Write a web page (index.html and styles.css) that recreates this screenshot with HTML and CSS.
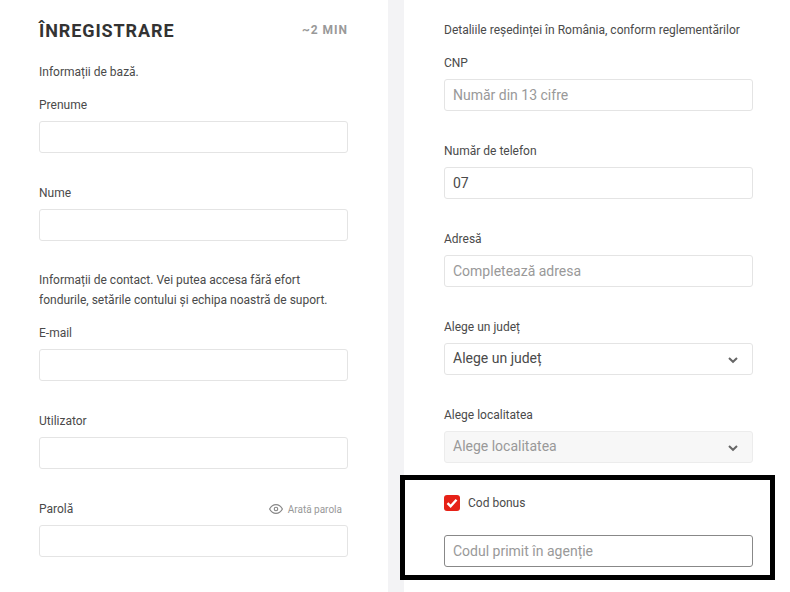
FILE: index.html
```html
<!DOCTYPE html>
<html lang="ro">
<head>
<meta charset="utf-8">
<title>Înregistrare</title>
<link rel="stylesheet" href="styles.css">
</head>
<body>
<main class="page">
  <section class="card card-left">
    <header class="head">
      <h1 class="title">ÎNREGISTRARE</h1>
      <span class="time">~2 MIN</span>
    </header>
    <p class="info info-base">Informații de bază.</p>
    <div class="field"><label class="label">Prenume</label><input class="input"></div>
    <div class="field"><label class="label">Nume</label><input class="input"></div>
    <p class="info info-contact">Informații de contact. Vei putea accesa fără efort fondurile, setările contului și echipa noastră de suport.</p>
    <div class="field"><label class="label">E-mail</label><input class="input"></div>
    <div class="field"><label class="label">Utilizator</label><input class="input"></div>
    <div class="field">
      <div class="label-row">
        <label class="label">Parolă</label>
        <span class="show">
          <svg class="eye" width="14" height="14" viewBox="0 0 24 24" fill="none" stroke="currentColor" stroke-width="2"><path d="M1 12s4-7.5 11-7.5S23 12 23 12s-4 7.5-11 7.5S1 12 1 12z"/><circle cx="12" cy="12" r="3"/></svg>
          Arată parola
        </span>
      </div>
      <input class="input">
    </div>
  </section>
  <div class="gutter"></div>
  <section class="card card-right">
    <p class="info info-res">Detaliile reședinței în România, conform reglementărilor</p>
    <div class="field"><label class="label">CNP</label><input class="input" placeholder="Număr din 13 cifre"></div>
    <div class="field"><label class="label">Număr de telefon</label><input class="input" value="07"></div>
    <div class="field"><label class="label">Adresă</label><input class="input" placeholder="Completează adresa"></div>
    <div class="field">
      <label class="label">Alege un județ</label>
      <div class="select"><span>Alege un județ</span><svg class="chev" width="12" height="8" viewBox="0 0 12 8" fill="none" stroke="currentColor" stroke-width="2"><path d="M2 2 6 5.8 10 2"/></svg></div>
    </div>
    <div class="field field-last">
      <label class="label">Alege localitatea</label>
      <div class="select select-off"><span>Alege localitatea</span><svg class="chev" width="12" height="8" viewBox="0 0 12 8" fill="none" stroke="currentColor" stroke-width="2"><path d="M2 2 6 5.8 10 2"/></svg></div>
    </div>
    <div class="bonus">
      <div class="check-row">
        <span class="check"><svg width="16" height="16" viewBox="0 0 16 16" fill="none" stroke="#fff" stroke-width="2.4"><path d="M3.5 8.2 6.6 11.2 12.5 4.8"/></svg></span>
        <span class="check-label">Cod bonus</span>
      </div>
      <input class="input input-focus" placeholder="Codul primit în agenție">
    </div>
  </section>
</main>
</body>
</html>
```

FILE: styles.css
```css
* { box-sizing: border-box; }
html, body { margin: 0; padding: 0; height: 592px; overflow: hidden; background: #f3f3f5; }
body { font-family: Roboto, "Liberation Sans", sans-serif; color: #4a4a4a; }
.page { display: flex; width: 790px; height: 592px; }
.card { background: #fff; height: 592px; }
.card-left { width: 388px; padding: 0 40px 0 39px; }
.gutter { width: 16px; background: #f3f3f5; }
.card-right { width: 386px; padding: 0 37px 0 40px; }
.head { display: flex; justify-content: space-between; align-items: center; height: 60px; }
.title { margin: 0; font-size: 18px; font-weight: 700; letter-spacing: 0.9px; color: #333; }
.time { font-size: 12px; font-weight: 700; letter-spacing: 1px; color: #999; }
.info { margin: 0; font-size: 12px; line-height: 20px; color: #4a4a4a; }
.info-base { margin-top: 2px; height: 20px; }
.info-contact { margin-top: 0; height: 40px; line-height: 19.5px; margin-bottom: 12px; }
.info-res { padding-top: 20px; height: 53px; }
.field { height: 88px; }
.field-last { height: 70px; }
.info-base + .field { margin-top: 13px; height: 88px; }
.label { display: block; font-size: 12px; line-height: 20px; height: 26px; color: #4a4a4a; }
.label-row { display: flex; justify-content: space-between; height: 26px; }
.show { display: flex; align-items: center; gap: 5px; height: 20px; font-size: 10px; color: #999; padding-right: 6px; }
.eye { color: #888; }
.input { display: block; width: 309px; height: 32px; border: 1px solid #e4e4e4; border-radius: 3px; padding: 0 8px 1px; margin: 0; font: 14px Roboto, sans-serif; color: #4a4a4a; background: #fff; outline: none; }
.input::placeholder { color: #999; opacity: 1; }
.select { display: flex; align-items: center; justify-content: space-between; width: 309px; height: 32px; border: 1px solid #e4e4e4; border-radius: 3px; padding: 0 13px 2px 8px; font-size: 14px; color: #4a4a4a; }
.chev { color: #666; margin-top: 3px; }
.select-off { background: #f7f7f7; color: #999; border-color: #ececec; }
.bonus { width: 375px; height: 105px; margin-left: -44px; border: 5px solid #000; padding: 15px 0 0 39px; background: #fff; }
.check-row { display: flex; align-items: center; gap: 8px; height: 16px; }
.check { display: block; width: 16px; height: 16px; background: #e62117; border-radius: 3px; }
.check svg { display: block; }
.check-label { font-size: 12px; color: #4a4a4a; }
.input-focus { margin-top: 24px; border-color: #888; }
```
